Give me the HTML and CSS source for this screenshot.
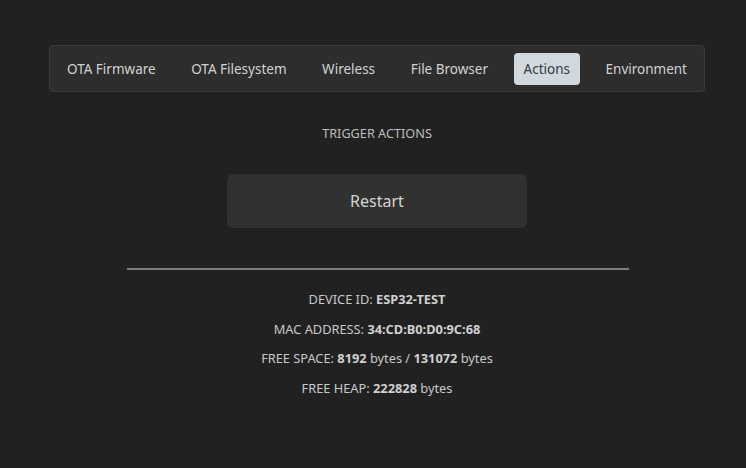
FILE: index.html
```html
<!DOCTYPE html>
<html>
<head>
<meta charset="utf-8">
<link rel="stylesheet" href="styles.css">
</head>
<body>
<div class="wrap">
  <nav class="tabs">
    <span class="tab">OTA Firmware</span>
    <span class="tab">OTA Filesystem</span>
    <span class="tab">Wireless</span>
    <span class="tab">File Browser</span>
    <span class="tab active">Actions</span>
    <span class="tab">Environment</span>
  </nav>
  <main class="content">
    <div class="title">TRIGGER ACTIONS</div>
    <button class="btn">Restart</button>
    <hr class="sep">
    <div class="info">
      <p>DEVICE ID: <b>ESP32-TEST</b></p>
      <p>MAC ADDRESS: <b>34:CD:B0:D0:9C:68</b></p>
      <p>FREE SPACE: <b>8192</b> bytes / <b>131072</b> bytes</p>
      <p>FREE HEAP: <b>222828</b> bytes</p>
    </div>
  </main>
</div>
</body>
</html>
```
FILE: styles.css
```css
html, body {
  margin: 0;
  padding: 0;
  background: #212121;
  font-family: "Noto Sans", "Open Sans", sans-serif;
  color: #cfcfcf;
}
.wrap {
  margin-left: 49px;
  width: 656px;
  padding-top: 45px;
}
.tabs {
  display: flex;
  justify-content: space-between;
  align-items: center;
  box-sizing: border-box;
  height: 47px;
  padding: 0 7px;
  background: #2d2d2d;
  border: 1px solid #3b3b3b;
  border-radius: 4px;
}
.tab {
  font-size: 13.5px;
  line-height: 32px;
  padding: 0 10px;
  border-radius: 4px;
  color: #d2d2d2;
}
.tab.active {
  background: #d1d9de;
  color: #333a40;
}
.content {
  display: flex;
  flex-direction: column;
  align-items: center;
}
.title {
  margin-top: 32px;
  font-size: 12.7px;
  line-height: 18px;
  color: #bdbdbd;
}
.btn {
  margin-top: 32px;
  width: 300px;
  height: 54px;
  border: 0;
  border-radius: 6px;
  background: #313131;
  color: #d4d4d4;
  font-family: inherit;
  font-size: 16px;
}
.sep {
  margin: 40px 0 0 2px;
  width: 502px;
  height: 0;
  border: 0;
  border-top: 2px solid #7d7d7d;
}
.info {
  margin-top: 15px;
  text-align: center;
  font-size: 12.8px;
  color: #c8c8c8;
}
.info p {
  margin: 0;
  line-height: 29.5px;
}
.info b {
  font-weight: 700;
  color: #d0d0d0;
}
```
